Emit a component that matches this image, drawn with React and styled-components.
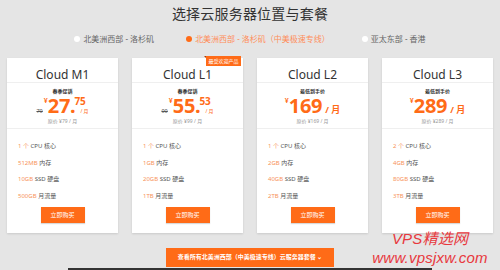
import styled, { createGlobalStyle } from 'styled-components';

const orange = '#ff6b17';
const font = '"Noto Sans", "Noto Sans CJK SC", sans-serif';

const GlobalStyle = createGlobalStyle`
  html, body {
    margin: 0;
    padding: 0;
    background: #e5e5e5;
  }
  body {
    font-family: ${font};
  }
`;

const plans = [
  { name: 'Cloud M1', tag: '春季促销', old: '79', int: '27', frac: '75', orig: '79', cpu: '1', ram: '512MB', disk: '10GB', traffic: '500GB' },
  { name: 'Cloud L1', tag: '春季促销', old: '99', int: '55', frac: '53', orig: '99', cpu: '1', ram: '1GB', disk: '20GB', traffic: '1TB', hot: true },
  { name: 'Cloud L2', tag: '最低到手价', int: '169', orig: '169', cpu: '1', ram: '2GB', disk: '40GB', traffic: '2TB' },
  { name: 'Cloud L3', tag: '最低到手价', int: '289', orig: '289', cpu: '2', ram: '4GB', disk: '80GB', traffic: '3TB' },
];

const regions = [
  { label: '北美洲西部 - 洛杉矶' },
  { label: '北美洲西部 - 洛杉矶（中美极速专线）', active: true },
  { label: '亚太东部 - 香港' },
];

const App = () => (
  <Page>
    <GlobalStyle />
    <Title>选择云服务器位置与套餐</Title>
    <RegionRow>
      {regions.map((r) => (
        <Region key={r.label} $active={r.active}>
          <Dot $active={r.active} />
          {r.label}
        </Region>
      ))}
    </RegionRow>
    <Cards>
      {plans.map((p) => (
        <Card key={p.name}>
          {p.hot && <Badge>最受欢迎产品</Badge>}
          <CardTitle>{p.name}</CardTitle>
          <PriceBox>
            <Tag>{p.tag}</Tag>
            <PriceRow>
              {p.old && <Strike>{p.old}</Strike>}
              <Yen>¥</Yen>
              <Big>{p.frac ? `${p.int}.` : p.int}</Big>
              {p.frac ? (
                <Frac>
                  <FracNum>{p.frac}</FracNum>
                  <FracUnit>/ 月</FracUnit>
                </Frac>
              ) : (
                <Unit>/ 月</Unit>
              )}
            </PriceRow>
            <Orig>原价 ¥{p.orig} / 月</Orig>
          </PriceBox>
          <Features>
            <Feature><b>{p.cpu} 个</b> CPU 核心</Feature>
            <Feature><b>{p.ram}</b> 内存</Feature>
            <Feature><b>{p.disk}</b> SSD 硬盘</Feature>
            <Feature><b>{p.traffic}</b> 月流量</Feature>
          </Features>
          <BuyButton>立即购买</BuyButton>
        </Card>
      ))}
    </Cards>
    <MoreButton>查看所有北美洲西部（中美极速专线）云服务器套餐 ⌄</MoreButton>
    <BottomStrip />
    <Watermark>
      <span>VPS精选网</span>
      <span>www.vpsjxw.com</span>
    </Watermark>
  </Page>
);

const Page = styled.div`
  position: relative;
  width: 500px;
  height: 270px;
  overflow: hidden;
  display: flex;
  flex-direction: column;
  align-items: center;
`;

const Title = styled.h1`
  margin: 4px 0 0;
  font-size: 14px;
  line-height: 20px;
  font-weight: 400;
  letter-spacing: 0.2px;
  color: #333;
`;

const RegionRow = styled.div`
  margin-top: 9px;
  display: flex;
  gap: 32px;
  height: 12px;
  align-items: center;
`;

const Region = styled.div`
  display: flex;
  align-items: center;
  gap: 3px;
  font-size: 8px;
  line-height: 12px;
  color: ${(p) => (p.$active ? '#ff8d5a' : '#666')};
`;

const Dot = styled.span`
  width: 6px;
  height: 6px;
  border-radius: 50%;
  background: ${(p) => (p.$active ? orange : '#fff')};
`;

const Cards = styled.div`
  margin-top: 13px;
  width: 100%;
  box-sizing: border-box;
  padding: 0 7px;
  display: grid;
  grid-template-columns: repeat(4, 111px);
  gap: 14px;
`;

const Card = styled.div`
  position: relative;
  height: 175px;
  background: #fff;
  box-shadow: 0 1px 2px rgba(0, 0, 0, 0.12);
  display: flex;
  flex-direction: column;
`;

const Badge = styled.div`
  position: absolute;
  top: -2px;
  right: 2px;
  width: 35px;
  height: 10px;
  background: ${orange};
  color: #fff;
  font-size: 5px;
  line-height: 10px;
  text-align: center;
  &::before {
    content: '';
    position: absolute;
    left: -2px;
    top: 0;
    border-style: solid;
    border-width: 0 2px 2px 0;
    border-color: transparent #a83c05 transparent transparent;
  }
`;

const CardTitle = styled.div`
  padding-top: 9px;
  height: 15px;
  line-height: 15px;
  font-size: 12px;
  color: #333;
  text-align: center;
  border-bottom: 1px solid #efefef;
`;

const PriceBox = styled.div`
  padding: 5px 0 3px;
  border-bottom: 1px solid #efefef;
  display: flex;
  flex-direction: column;
  align-items: center;
`;

const Tag = styled.div`
  font-size: 5px;
  line-height: 7px;
  font-weight: 700;
  color: #333;
`;

const PriceRow = styled.div`
  margin-top: 1px;
  height: 20px;
  display: flex;
  align-items: flex-start;
  color: ${orange};
  font-weight: 700;
`;

const Strike = styled.span`
  margin-top: 12px;
  margin-right: 1px;
  font-size: 5.5px;
  line-height: 6px;
  font-weight: 400;
  color: #555;
  text-decoration: line-through;
`;

const Yen = styled.span`
  margin-top: 1px;
  font-size: 7px;
  line-height: 8px;
`;

const Big = styled.span`
  font-size: 20px;
  line-height: 20px;
  letter-spacing: -0.3px;
`;

const Frac = styled.span`
  display: flex;
  flex-direction: column;
  margin-left: -1px;
`;

const FracNum = styled.span`
  font-size: 10px;
  line-height: 11px;
`;

const FracUnit = styled.span`
  margin-top: 1px;
  margin-left: 6px;
  font-size: 5px;
  line-height: 6px;
  font-weight: 400;
`;

const Unit = styled.span`
  margin-top: 9px;
  margin-left: 3px;
  font-size: 9px;
  line-height: 10px;
`;

const Orig = styled.div`
  margin-top: 1px;
  font-size: 5px;
  line-height: 8px;
  color: #999;
`;

const Features = styled.div`
  padding: 9px 11px 0;
`;

const Feature = styled.div`
  font-size: 6px;
  line-height: 16.5px;
  color: #555;
  b {
    font-weight: 400;
    color: #f7935a;
  }
`;

const BuyButton = styled.div`
  margin: 3px auto 0;
  width: 44px;
  height: 16px;
  background: ${orange};
  color: #fff;
  font-size: 6px;
  line-height: 16px;
  text-align: center;
  box-shadow: 0 1px 1px rgba(0, 0, 0, 0.15);
`;

const MoreButton = styled.div`
  margin-top: 15px;
  width: 168px;
  height: 19px;
  background: ${orange};
  color: #fff;
  font-size: 6px;
  font-weight: 700;
  line-height: 19px;
  text-align: center;
`;

const BottomStrip = styled.div`
  margin-top: 1px;
  width: 364px;
  height: 3px;
  background: #333;
`;

const Watermark = styled.div`
  position: absolute;
  left: 368px;
  top: 229px;
  width: 124px;
  display: flex;
  flex-direction: column;
  align-items: center;
  color: #e8383d;
  font-family: "Liberation Sans", "Noto Sans CJK SC", sans-serif;
  font-style: italic;
  font-size: 15px;
  line-height: 19px;
  letter-spacing: 0.2px;
`;

export default App;
